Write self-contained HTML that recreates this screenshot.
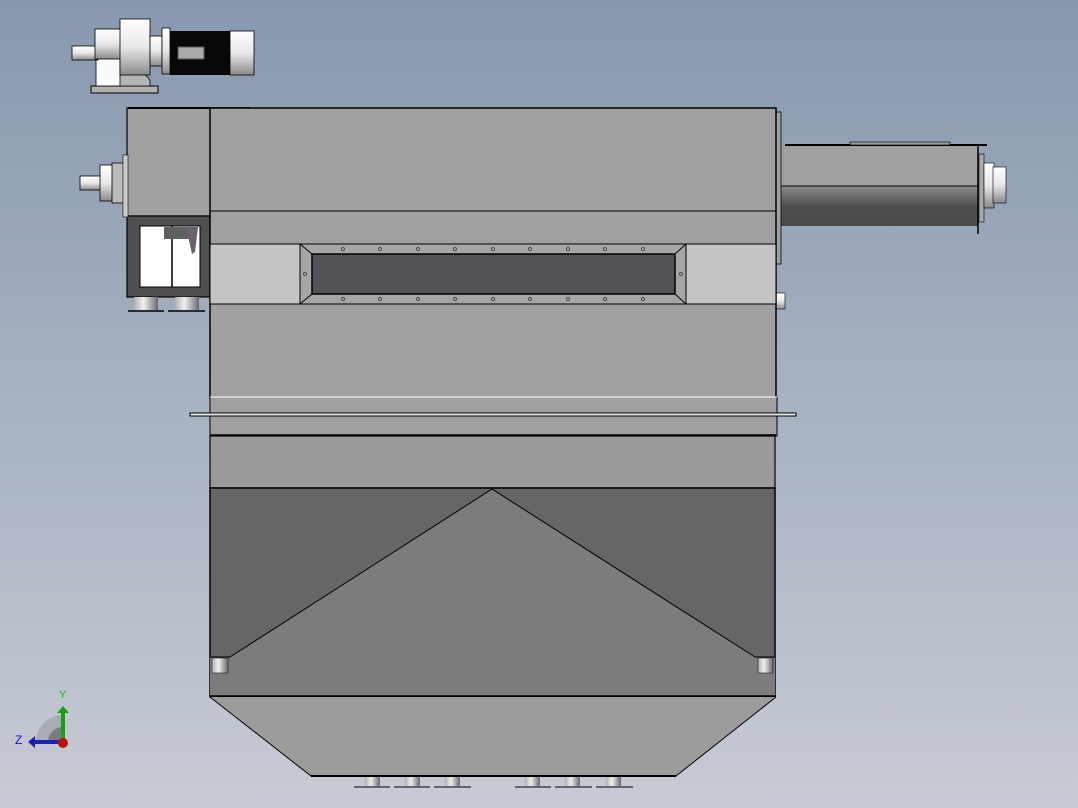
<!DOCTYPE html>
<html><head><meta charset="utf-8"><style>
html,body{margin:0;padding:0;width:1078px;height:808px;overflow:hidden}
svg{display:block}
text{font-family:"Liberation Sans",sans-serif}
</style></head><body>
<svg width="1078" height="808" viewBox="0 0 1078 808" xmlns="http://www.w3.org/2000/svg">
<defs>
<linearGradient id="bg" x1="0" y1="0" x2="0" y2="1"><stop offset="0" stop-color="#8898ae"/><stop offset="1" stop-color="#c7cbd4"/></linearGradient>
<linearGradient id="cyl" x1="0" y1="0" x2="0" y2="1"><stop offset="0" stop-color="#8a8a8a"/><stop offset="0.5" stop-color="#4e4e4e"/><stop offset="1" stop-color="#4a484c"/></linearGradient>
<linearGradient id="met" x1="0" y1="0" x2="0" y2="1"><stop offset="0" stop-color="#ffffff"/><stop offset="0.5" stop-color="#e8e8e8"/><stop offset="1" stop-color="#8a8a8a"/></linearGradient>
<linearGradient id="metx" x1="0" y1="0" x2="1" y2="0"><stop offset="0" stop-color="#b0b0b0"/><stop offset="0.4" stop-color="#f0f0f0"/><stop offset="1" stop-color="#6a6670"/></linearGradient>
</defs>
<rect width="1078" height="808" fill="url(#bg)"/>

<!-- motor -->
<rect x="91" y="86" width="67" height="7" fill="#b0b0b0" stroke="#000" stroke-width="1"/>
<rect x="96" y="58" width="30" height="28" fill="#fafafa" stroke="#000" stroke-width="0.8"/>
<polygon points="120,53 126,53 150,80 150,86 120,86" fill="#b4b4b4" stroke="#000" stroke-width="0.8"/>
<rect x="72" y="46" width="26" height="14" fill="url(#met)" stroke="#000" stroke-width="0.8"/>
<rect x="95" y="29" width="30" height="30" fill="url(#met)" stroke="#000" stroke-width="0.8"/>
<rect x="120" y="19" width="30" height="56" fill="url(#met)" stroke="#000" stroke-width="0.8"/>
<rect x="150" y="36" width="12" height="30" fill="url(#met)" stroke="#000" stroke-width="0.8"/>
<rect x="162" y="28" width="8" height="46" fill="url(#met)" stroke="#000" stroke-width="0.8"/>
<rect x="170" y="31" width="62" height="44" fill="#080808"/>
<rect x="178" y="47" width="26" height="12" fill="#aaa" stroke="#555"/>
<rect x="230" y="31" width="24" height="44" fill="url(#met)" stroke="#000" stroke-width="0.8"/>

<!-- left box -->
<rect x="127" y="108" width="84" height="108" fill="#a0a0a0" stroke="#000" stroke-width="1.2"/>
<line x1="128" y1="108" x2="250" y2="108" stroke="#000" stroke-width="2"/>
<rect x="127" y="216" width="83" height="81" fill="#505050" stroke="#000" stroke-width="1.2"/>
<rect x="140" y="226" width="60" height="61" fill="#fff" stroke="#000" stroke-width="1"/>
<line x1="172" y1="226" x2="172" y2="287" stroke="#000" stroke-width="1.5"/>
<rect x="164" y="227" width="30" height="12" fill="#606060"/>
<path d="M186 227 L198 227 L195 252 L192 254 Z" fill="#6a6070"/>
<rect x="134" y="297" width="24" height="13" fill="url(#metx)"/>
<rect x="175" y="297" width="24" height="13" fill="url(#metx)"/>
<line x1="128" y1="311" x2="164" y2="311" stroke="#000" stroke-width="1.5"/>
<line x1="168" y1="311" x2="205" y2="311" stroke="#000" stroke-width="1.5"/>
<rect x="80" y="176" width="22" height="14" fill="url(#met)" stroke="#000" stroke-width="0.8"/>
<rect x="100" y="165" width="14" height="36" fill="url(#met)" stroke="#000" stroke-width="0.8"/>
<rect x="112" y="163" width="13" height="40" fill="#bbb" stroke="#000" stroke-width="0.8"/>
<rect x="123" y="155" width="5" height="62" fill="#ccc" stroke="#000" stroke-width="0.6"/>

<!-- right cylinder -->
<rect x="780" y="146" width="198" height="40" fill="#a0a0a0"/>
<rect x="780" y="186" width="198" height="40" fill="url(#cyl)"/>
<line x1="780" y1="186" x2="978" y2="186" stroke="#000" stroke-width="1"/>
<line x1="785" y1="145" x2="987" y2="145" stroke="#000" stroke-width="2"/>
<rect x="850" y="142" width="100" height="3" fill="#999" stroke="#000" stroke-width="0.6"/>
<line x1="978" y1="146" x2="978" y2="234" stroke="#000" stroke-width="1.5"/>
<rect x="979" y="154" width="5" height="68" fill="#aaa" stroke="#000" stroke-width="0.6"/>
<rect x="984" y="163" width="10" height="45" fill="url(#met)" stroke="#000" stroke-width="0.6"/>
<rect x="993" y="167" width="13" height="36" fill="url(#met)" stroke="#000" stroke-width="0.6"/>
<rect x="776" y="112" width="5" height="152" fill="#a0a0a0" stroke="#000" stroke-width="0.8"/>
<rect x="776" y="293" width="9" height="16" fill="url(#met)" stroke="#000" stroke-width="0.6"/>

<!-- main upper body -->
<rect x="210" y="108" width="566" height="290" fill="#a0a0a0" stroke="#000" stroke-width="1.5"/>
<line x1="210" y1="211" x2="776" y2="211" stroke="#000" stroke-width="1"/>
<rect x="210" y="244" width="566" height="60" fill="#c4c4c4" stroke="#000" stroke-width="1"/>
<polygon points="300,244 686,244 686,304 300,304" fill="#a6a6a6" stroke="#000" stroke-width="1"/>
<line x1="300" y1="244" x2="312" y2="254" stroke="#000"/><line x1="686" y1="244" x2="675" y2="254" stroke="#000"/>
<line x1="300" y1="304" x2="312" y2="294" stroke="#000"/><line x1="686" y1="304" x2="675" y2="294" stroke="#000"/>
<rect x="312" y="254" width="363" height="40" fill="#545158" stroke="#000" stroke-width="1.5"/>
<g fill="none" stroke="#333" stroke-width="0.8">
<circle cx="343" cy="249" r="1.5"/><circle cx="380" cy="249" r="1.5"/><circle cx="418" cy="249" r="1.5"/><circle cx="455" cy="249" r="1.5"/><circle cx="493" cy="249" r="1.5"/><circle cx="530" cy="249" r="1.5"/><circle cx="568" cy="249" r="1.5"/><circle cx="605" cy="249" r="1.5"/><circle cx="643" cy="249" r="1.5"/>
<circle cx="343" cy="299" r="1.5"/><circle cx="380" cy="299" r="1.5"/><circle cx="418" cy="299" r="1.5"/><circle cx="455" cy="299" r="1.5"/><circle cx="493" cy="299" r="1.5"/><circle cx="530" cy="299" r="1.5"/><circle cx="568" cy="299" r="1.5"/><circle cx="605" cy="299" r="1.5"/><circle cx="643" cy="299" r="1.5"/>
<circle cx="305" cy="274" r="1.5"/><circle cx="681" cy="274" r="1.5"/>
</g>

<!-- belt strip -->
<rect x="210" y="397" width="567" height="39" fill="#a0a0a0" stroke="#000" stroke-width="1"/>
<line x1="210" y1="397" x2="777" y2="397" stroke="#fff" stroke-width="1"/>
<rect x="190" y="413" width="606" height="3" fill="#e8e8e8" stroke="#000" stroke-width="1"/>
<line x1="210" y1="435" x2="776" y2="435" stroke="#000" stroke-width="1.5"/>

<!-- middle section -->
<rect x="210" y="436" width="565" height="52" fill="#9a9a9a" stroke="#000" stroke-width="1.2"/>

<!-- hopper -->
<rect x="210" y="488" width="565" height="209" fill="#666666" stroke="#000" stroke-width="1.5"/>
<polygon points="492,489 755,657 775,657 775,696 210,696 210,657 230,657" fill="#7c7c7c"/>
<polyline points="230,657 492,489 755,657" fill="none" stroke="#000" stroke-width="1"/>
<line x1="210" y1="657" x2="230" y2="657" stroke="#000"/>
<line x1="755" y1="657" x2="775" y2="657" stroke="#000"/>
<rect x="212" y="658" width="16" height="15" fill="url(#metx)" stroke="#222" stroke-width="0.6"/>
<rect x="758" y="658" width="15" height="15" fill="url(#metx)" stroke="#222" stroke-width="0.6"/>
<line x1="210" y1="696" x2="776" y2="696" stroke="#000" stroke-width="1.5"/>

<!-- bottom trapezoid -->
<polygon points="210,697 776,697 676,776 311,776" fill="#9c9c9c"/>
<polyline points="210,697 311,776 676,776 776,697" fill="none" stroke="#000" stroke-width="1"/>
<line x1="311" y1="776" x2="676" y2="776" stroke="#000" stroke-width="2"/>
<g>
<rect x="365" y="777" width="15" height="9" fill="url(#metx)"/><rect x="405" y="777" width="15" height="9" fill="url(#metx)"/><rect x="445" y="777" width="15" height="9" fill="url(#metx)"/>
<rect x="525" y="777" width="15" height="9" fill="url(#metx)"/><rect x="565" y="777" width="15" height="9" fill="url(#metx)"/><rect x="606" y="777" width="15" height="9" fill="url(#metx)"/>
<g stroke="#000" stroke-width="1"><line x1="354" y1="787" x2="390" y2="787"/><line x1="394" y1="787" x2="430" y2="787"/><line x1="434" y1="787" x2="471" y2="787"/><line x1="515" y1="787" x2="551" y2="787"/><line x1="555" y1="787" x2="592" y2="787"/><line x1="596" y1="787" x2="633" y2="787"/></g>
</g>

<!-- axis triad -->
<path d="M36 742 A27 27 0 0 1 63 715 L63 742 Z" fill="#a8acb4"/>
<path d="M48 742 A15 15 0 0 1 63 727 L63 742 Z" fill="#7a7c80"/>
<rect x="61" y="712" width="4" height="30" fill="#18a018"/>
<polygon points="57,713 63,706 69,713" fill="#18a018"/>
<rect x="34" y="740" width="28" height="4" fill="#2020b0"/>
<polygon points="35,736 28,742 35,748" fill="#2020b0"/>
<circle cx="63" cy="743" r="5" fill="#c01010"/>
<text x="59" y="698" font-size="11" fill="#10c010">Y</text>
<text x="15" y="744" font-size="12" fill="#1010e0">Z</text>
</svg>
</body></html>
